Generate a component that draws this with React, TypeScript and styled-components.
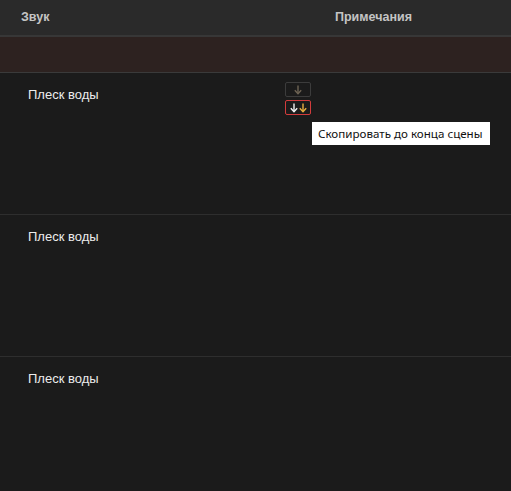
import React from "react";
import styled, { createGlobalStyle } from "styled-components";

const Global = createGlobalStyle`
  html, body { margin: 0; padding: 0; background: #1b1b1b; }
  body { font-family: "Liberation Sans", Arial, sans-serif; overflow: hidden; }
`;

const Table = styled.div`
  width: 511px;
  height: 491px;
  display: flex;
  flex-direction: column;
  background: #1b1b1b;
`;

const Header = styled.div`
  height: 35px;
  display: grid;
  grid-template-columns: 314px 1fr;
  align-items: center;
  padding-left: 21px;
  background: #2a2a2a;
  border-bottom: 2px solid #373737;
  box-sizing: content-box;
  flex-shrink: 0;
`;

const HeaderCell = styled.div`
  font-size: 12.5px;
  font-weight: bold;
  color: #c4c4c4;
  margin-top: -1px;
`;

const Band = styled.div`
  height: 35px;
  background: #2d2220;
  border-bottom: 1px solid #3a3a3a;
  flex-shrink: 0;
`;

const Row = styled.div<{ $h: number }>`
  height: ${(p) => p.$h}px;
  display: grid;
  grid-template-columns: 257px 1fr;
  padding: 14px 0 0 28px;
  box-sizing: border-box;
  border-bottom: 1px solid #2e2e2e;
  flex-shrink: 0;
`;

const SoundName = styled.div`
  font-size: 13px;
  line-height: 16px;
  color: #ececec;
`;

const Actions = styled.div`
  position: relative;
  display: flex;
  flex-direction: column;
  gap: 3px;
  margin-top: -5px;
`;

const ArrowButton = styled.button<{ $active?: boolean }>`
  width: 26px;
  height: 15px;
  padding: 0;
  display: flex;
  align-items: center;
  justify-content: center;
  gap: 1px;
  background: #1b1b1b;
  border: 1px solid ${(p) => (p.$active ? "#d23c3c" : "#3c3c3c")};
  border-radius: 2px;
  cursor: pointer;
`;

const Tooltip = styled.div`
  position: absolute;
  left: 27px;
  top: 40px;
  height: 23px;
  padding: 0 7px 0 6px;
  display: flex;
  align-items: center;
  white-space: nowrap;
  background: #ffffff;
  color: #111111;
  font-family: "Noto Sans", "Open Sans", sans-serif;
  font-size: 11.6px;
`;

const Arrow: React.FC<{ color: string }> = ({ color }) => (
  <svg width="8" height="10" viewBox="0 0 8 10">
    <path d="M4 0.5 V8.5" stroke={color} strokeWidth="1.4" fill="none" />
    <path d="M0.8 5.3 L4 8.7 L7.2 5.3" stroke={color} strokeWidth="1.4" fill="none" />
  </svg>
);

const rows = [142, 142, 135];

export default function App() {
  return (
    <>
      <Global />
      <Table>
        <Header>
          <HeaderCell>Звук</HeaderCell>
          <HeaderCell>Примечания</HeaderCell>
        </Header>
        <Band />
        {rows.map((h, i) => (
          <Row key={i} $h={h}>
            <SoundName>Плеск воды</SoundName>
            {i === 0 && (
              <Actions>
                <ArrowButton>
                  <Arrow color="#6e6454" />
                </ArrowButton>
                <ArrowButton $active>
                  <Arrow color="#f4f4f4" />
                  <Arrow color="#e9b040" />
                </ArrowButton>
                <Tooltip>Скопировать до конца сцены</Tooltip>
              </Actions>
            )}
          </Row>
        ))}
      </Table>
    </>
  );
}
